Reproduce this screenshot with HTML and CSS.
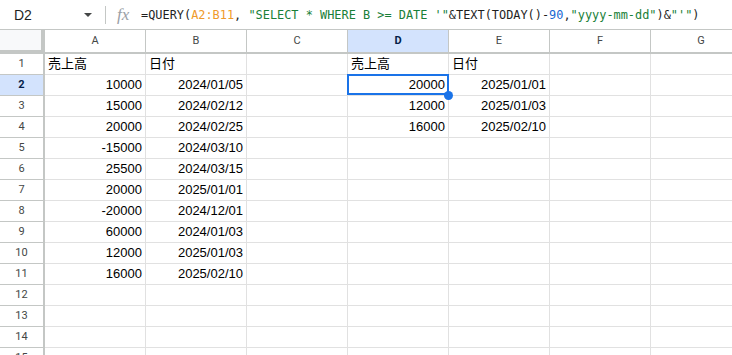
FILE: index.html
```html
<!DOCTYPE html>
<html lang="ja">
<head>
    <meta charset="UTF-8">
    <meta name="viewport" content="width=device-width, initial-scale=1.0">
    <title>QUERY - Sheet</title>
    <link rel="stylesheet" href="styles.css">
</head>
<body>
    <div class="formula-bar">
        <div class="name-box"><span>D2</span><span class="caret"></span></div>
        <div class="divider"></div>
        <span class="fx">fx</span>
        <div class="formula">=QUERY(<span class="ref">A2:B11</span>, <span class="str">"SELECT * WHERE B &gt;= DATE '"</span>&amp;TEXT(TODAY()-<span class="lit">90</span>,<span class="str">"yyyy-mm-dd"</span>)&amp;<span class="str">"'"</span>)</div>
    </div>

    <div class="sheet">
        <div class="row head">
            <div class="corner"></div>
            <div class="col-h">A</div>
            <div class="col-h">B</div>
            <div class="col-h">C</div>
            <div class="col-h active">D</div>
            <div class="col-h">E</div>
            <div class="col-h">F</div>
            <div class="col-h">G</div>
        </div>
        <div class="row">
            <div class="row-h">1</div>
            <div class="cell">売上高</div><div class="cell">日付</div><div class="cell"></div>
            <div class="cell">売上高</div><div class="cell">日付</div><div class="cell"></div><div class="cell"></div>
        </div>
        <div class="row">
            <div class="row-h active">2</div>
            <div class="cell n">10000</div><div class="cell n">2024/01/05</div><div class="cell"></div>
            <div class="cell n sel">20000</div><div class="cell n">2025/01/01</div><div class="cell"></div><div class="cell"></div>
        </div>
        <div class="row">
            <div class="row-h">3</div>
            <div class="cell n">15000</div><div class="cell n">2024/02/12</div><div class="cell"></div>
            <div class="cell n">12000</div><div class="cell n">2025/01/03</div><div class="cell"></div><div class="cell"></div>
        </div>
        <div class="row">
            <div class="row-h">4</div>
            <div class="cell n">20000</div><div class="cell n">2024/02/25</div><div class="cell"></div>
            <div class="cell n">16000</div><div class="cell n">2025/02/10</div><div class="cell"></div><div class="cell"></div>
        </div>
        <div class="row">
            <div class="row-h">5</div>
            <div class="cell n">-15000</div><div class="cell n">2024/03/10</div><div class="cell"></div>
            <div class="cell"></div><div class="cell"></div><div class="cell"></div><div class="cell"></div>
        </div>
        <div class="row">
            <div class="row-h">6</div>
            <div class="cell n">25500</div><div class="cell n">2024/03/15</div><div class="cell"></div>
            <div class="cell"></div><div class="cell"></div><div class="cell"></div><div class="cell"></div>
        </div>
        <div class="row">
            <div class="row-h">7</div>
            <div class="cell n">20000</div><div class="cell n">2025/01/01</div><div class="cell"></div>
            <div class="cell"></div><div class="cell"></div><div class="cell"></div><div class="cell"></div>
        </div>
        <div class="row">
            <div class="row-h">8</div>
            <div class="cell n">-20000</div><div class="cell n">2024/12/01</div><div class="cell"></div>
            <div class="cell"></div><div class="cell"></div><div class="cell"></div><div class="cell"></div>
        </div>
        <div class="row">
            <div class="row-h">9</div>
            <div class="cell n">60000</div><div class="cell n">2024/01/03</div><div class="cell"></div>
            <div class="cell"></div><div class="cell"></div><div class="cell"></div><div class="cell"></div>
        </div>
        <div class="row">
            <div class="row-h">10</div>
            <div class="cell n">12000</div><div class="cell n">2025/01/03</div><div class="cell"></div>
            <div class="cell"></div><div class="cell"></div><div class="cell"></div><div class="cell"></div>
        </div>
        <div class="row">
            <div class="row-h">11</div>
            <div class="cell n">16000</div><div class="cell n">2025/02/10</div><div class="cell"></div>
            <div class="cell"></div><div class="cell"></div><div class="cell"></div><div class="cell"></div>
        </div>
        <div class="row">
            <div class="row-h">12</div>
            <div class="cell"></div><div class="cell"></div><div class="cell"></div>
            <div class="cell"></div><div class="cell"></div><div class="cell"></div><div class="cell"></div>
        </div>
        <div class="row">
            <div class="row-h">13</div>
            <div class="cell"></div><div class="cell"></div><div class="cell"></div>
            <div class="cell"></div><div class="cell"></div><div class="cell"></div><div class="cell"></div>
        </div>
        <div class="row">
            <div class="row-h">14</div>
            <div class="cell"></div><div class="cell"></div><div class="cell"></div>
            <div class="cell"></div><div class="cell"></div><div class="cell"></div><div class="cell"></div>
        </div>
        <div class="row">
            <div class="row-h">15</div>
            <div class="cell"></div><div class="cell"></div><div class="cell"></div>
            <div class="cell"></div><div class="cell"></div><div class="cell"></div><div class="cell"></div>
        </div>
    </div>
</body>
</html>
```

FILE: styles.css
```css
* {
    box-sizing: border-box;
}
body {
    margin: 0;
    width: 732px;
    height: 355px;
    overflow: hidden;
    background: #fff;
    font-family: "Liberation Sans", "Noto Sans CJK JP", Arial, sans-serif;
    color: #000;
}

/* formula bar */
.formula-bar {
    display: flex;
    align-items: center;
    height: 30px;
    border-bottom: 1px solid #c4c7c5;
    color: #1f1f1f;
}
.name-box {
    display: flex;
    align-items: center;
    justify-content: space-between;
    width: 105px;
    padding: 0 13px 0 14px;
    font-size: 14px;
}
.caret {
    width: 0;
    height: 0;
    border-left: 4px solid transparent;
    border-right: 4px solid transparent;
    border-top: 4px solid #444746;
}
.divider {
    width: 1px;
    height: 18px;
    background: #c4c7c5;
}
.fx {
    margin-left: 11px;
    width: 24px;
    font-family: "Liberation Serif", serif;
    font-style: italic;
    font-size: 17px;
    color: #9aa0a6;
}
.formula {
    font-family: "DejaVu Sans Mono", "Liberation Mono", monospace;
    font-size: 11.9px;
    white-space: nowrap;
}
.formula .ref {
    color: #ef9a2a;
}
.formula .str {
    color: #188038;
}
.formula .lit {
    color: #1967d2;
}

/* grid */
.sheet {
    width: 732px;
    overflow: hidden;
}
.row {
    display: flex;
    height: 21px;
}
.row.head {
    height: 24px;
}
.corner {
    flex: none;
    width: 45px;
    background: #f8f9fa;
    border-right: 4px solid #c4c7c5;
    border-bottom: 4px solid #c4c7c5;
}
.col-h {
    flex: none;
    width: 101px;
    border-right: 1px solid #c4c7c5;
    border-bottom: 2px solid #c4c7c5;
    text-align: center;
    line-height: 22px;
    font-family: Roboto, "Liberation Sans", sans-serif;
    font-size: 11px;
    color: #444746;
}
.row-h {
    flex: none;
    width: 45px;
    border-right: 2px solid #c4c7c5;
    border-bottom: 1px solid #c4c7c5;
    text-align: center;
    line-height: 20px;
    font-family: Roboto, "Liberation Sans", sans-serif;
    font-size: 11px;
    color: #444746;
}
.col-h.active,
.row-h.active {
    background: #d3e3fd;
    color: #041e49;
    font-weight: bold;
}
.cell {
    flex: none;
    width: 101px;
    padding: 0 3px;
    border-right: 1px solid #e1e1e1;
    border-bottom: 1px solid #e1e1e1;
    font-size: 13px;
    line-height: 20px;
    white-space: nowrap;
    overflow: hidden;
}
.cell.n {
    text-align: right;
}
.cell.sel {
    position: relative;
    overflow: visible;
}
.cell.sel::before {
    content: "";
    position: absolute;
    left: -1px;
    top: -1px;
    right: -1px;
    bottom: 0;
    border: 2px solid #1a73e8;
}
.cell.sel::after {
    content: "";
    position: absolute;
    right: -5px;
    bottom: -5px;
    width: 9px;
    height: 9px;
    border-radius: 50%;
    background: #1a73e8;
    z-index: 1;
}
```
